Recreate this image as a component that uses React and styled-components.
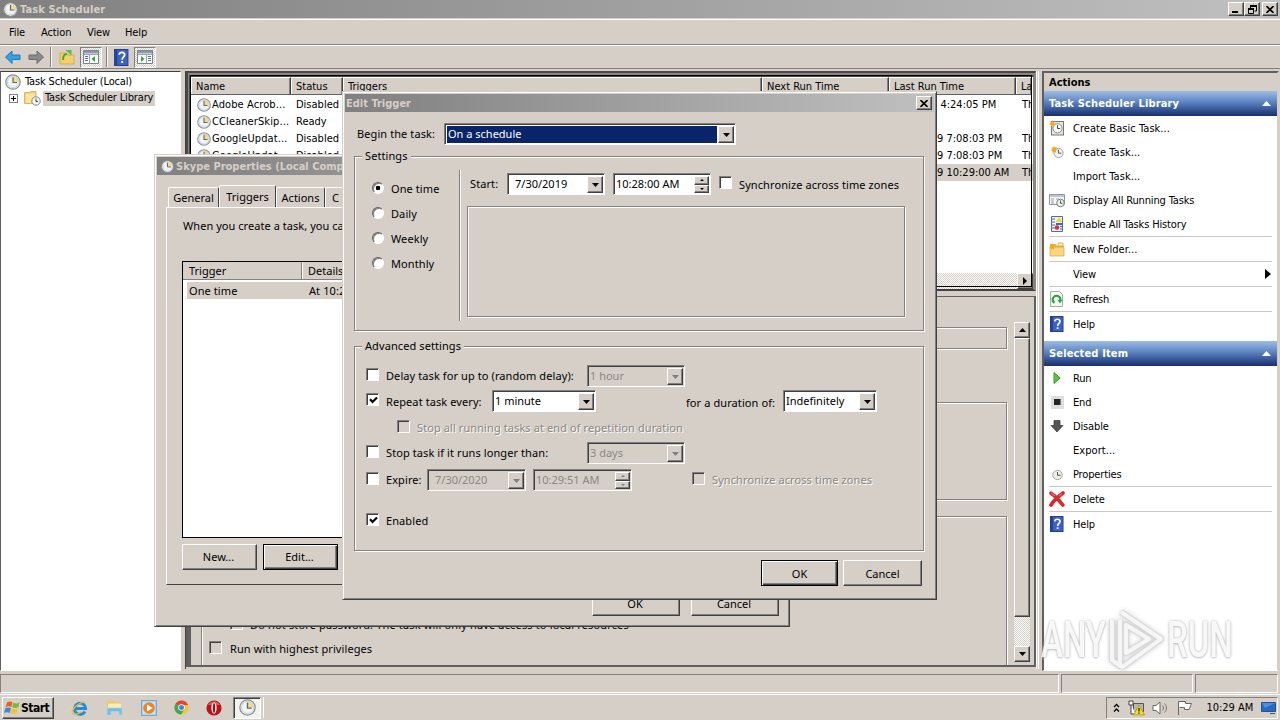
import React from "react"
import styled, { createGlobalStyle, css } from "styled-components"

const face = "#d5cfc8"
const tahoma = `"DejaVu Sans Condensed", "DejaVu Sans", sans-serif`
const segoe = `"Noto Sans", sans-serif`

const menuItems = [
  { label: "File", width: 32 },
  { label: "Action", width: 46 },
  { label: "View", width: 38 },
  { label: "Help", width: 40 },
]

const columns = [
  { label: "Name", width: 100 },
  { label: "Status", width: 52 },
  { label: "Triggers", width: 419 },
  { label: "Next Run Time", width: 127 },
  { label: "Last Run Time", width: 127 },
  { label: "La", width: 16 },
]

const tasks = [
  { name: "Adobe Acrob...", status: "Disabled", last: "8 4:24:05 PM", res: "Th", pad: 43 },
  { name: "CCleanerSkip...", status: "Ready", last: "", res: "", pad: 43 },
  { name: "GoogleUpdat...", status: "Disabled", last: "9 7:08:03 PM", res: "Th", pad: 49 },
  { name: "GoogleUpdat...", status: "Disabled", last: "9 7:08:03 PM", res: "Th", pad: 49 },
  { name: "", status: "", last: "9 10:29:00 AM", res: "Th", pad: 49, selected: true },
]

const Clock = ({ size = 14 }) => (
  <svg width={size} height={size} viewBox="0 0 16 16">
    <circle cx="8" cy="8" r="7.2" fill="#eef3f4" stroke="#8b8e92" strokeWidth="1.2" />
    <path d="M8 8V2.4A5.6 5.6 0 0 1 13.6 8Z" fill="#f3dc86" />
    <circle cx="8" cy="8" r="5.7" fill="none" stroke="#c6cdd2" strokeWidth=".8" />
    <path d="M8 3.2V8.5H12" fill="none" stroke="#5d656e" strokeWidth="1.2" />
  </svg>
)

const Star = () => (
  <path d="M4 0l1 2.4L7.5 1.600 6.500 4 9 5.200 6.300 6 6.800 8.600 4.400 7.300 2.400 9 2.300 6.300 0 5.500 2.200 4.200 1.200 1.800 3.200 2.500Z" fill="#f0a81f" />
)

const FolderIcon = ({ size = 16 }) => (
  <svg width={size} height={size} viewBox="0 0 16 16">
    <path d="M1 3h6l1 2h7v10H1z" fill="#e9b94c" />
    <path d="M9 2h5v3H9z" fill="#fff2ba" stroke="#c9973a" strokeWidth=".7" />
    <path d="M1 6h14v9H1z" fill="#f8d77f" stroke="#d9a640" strokeWidth=".7" />
    <g transform="translate(0 2) scale(.75)"><Star /></g>
  </svg>
)

const HelpIcon = ({ size = 16 }) => (
  <svg width={size} height={size} viewBox="0 0 16 16">
    <rect x="1.500" y=".5" width="12.500" height="15" fill="#3c63c4" stroke="#233f8e" />
    <path d="M2 1h2v14H2z" fill="#27458f" />
    <path d="M5.800 5.500C5.800 2.300 11.300 2.500 11 5.600 10.800 7.400 8.600 7.500 8.600 10" fill="none" stroke="#fff" strokeWidth="1.600" />
    <rect x="7.700" y="11.300" width="1.800" height="1.800" fill="#fff" />
  </svg>
)

const BasicTaskIcon = () => (
  <svg width="16" height="16" viewBox="0 0 16 16">
    <rect x="2.500" y="1.500" width="12" height="13.500" fill="#e9e4dc" stroke="#7b7771" />
    <circle cx="8.500" cy="8.300" r="4.600" fill="#f5f7f7" stroke="#868b90" />
    <path d="M8.500 5.200v3.300h2.600" fill="none" stroke="#444" />
    <g transform="scale(.75)"><Star /></g>
  </svg>
)

const NewTaskIcon = () => (
  <svg width="16" height="16" viewBox="0 0 16 16">
    <circle cx="9.500" cy="9" r="4.600" fill="#eef2f3" stroke="#a3a8ac" />
    <path d="M9.500 5.800v3.400h2.800" fill="none" stroke="#53606c" />
    <g transform="translate(1.500 1.500) scale(.85)"><Star /></g>
  </svg>
)

const RunningIcon = () => (
  <svg width="16" height="16" viewBox="0 0 16 16">
    <path d="M.5 2.500h15v10H.5z" fill="#f7f8fa" stroke="#8b99ab" />
    <path d="M1 3h14v2H1z" fill="#b9c5d4" />
    <path d="M2 7h3M2 9h3M2 11h3M7 7h3" stroke="#94a0ad" />
    <circle cx="11.500" cy="11" r="3.800" fill="#edf2ec" stroke="#768275" />
    <path d="M11.500 8.500V11.300h2" fill="none" stroke="#455" />
  </svg>
)

const HistoryIcon = () => (
  <svg width="16" height="16" viewBox="0 0 16 16">
    <path d="M2.500.5h11v15h-11z" fill="#eef1fa" stroke="#536aa4" />
    <path d="M3 3h3M3 6h3M3 9h3M3 12h3" stroke="#5d6c91" />
    <path d="M10 1l3.500 5h-7z" fill="#f2d52f" />
    <path d="M7 8h6" stroke="#3e62bb" strokeWidth="2" />
    <circle cx="8" cy="11.500" r="2.300" fill="#d6312c" />
    <path d="M11 10.500h2M11 13h2" stroke="#3e62bb" />
  </svg>
)

const RefreshIcon = () => (
  <svg width="16" height="16" viewBox="0 0 16 16">
    <path d="M1.500.5h9l3 3v12h-12z" fill="#f4faf2" stroke="#9bb79b" />
    <path d="M5.500 11.800A3.800 3.800 0 1 1 11.200 9.500" fill="none" stroke="#2fa03b" strokeWidth="2" />
    <path d="M8.500 8.700h5l-2.500 3.800z" fill="#2fa03b" />
  </svg>
)

const RunIcon = () => (
  <svg width="16" height="16" viewBox="0 0 16 16">
    <path d="M5 2.500L11 8l-6 5.500z" fill="#57c93b" stroke="#36972a" />
  </svg>
)

const EndIcon = () => (
  <svg width="16" height="16" viewBox="0 0 16 16">
    <path d="M2 2h13v13H2z" fill="#dedede" />
    <path d="M5 5h6.500v6H5z" fill="#252525" />
  </svg>
)

const DisableIcon = () => (
  <svg width="16" height="16" viewBox="0 0 16 16">
    <path d="M5 2.500h6v5h3L8 14 2 7.500h3z" fill="#555" stroke="#333" strokeWidth=".7" />
  </svg>
)

const DeleteIcon = () => (
  <svg width="16" height="16" viewBox="0 0 16 16">
    <path d="M2 2.200C5.500 4.500 10 9 13.800 14M14 2C10 5 5 9 2 14" fill="none" stroke="#d52b2f" strokeWidth="3.700" strokeLinecap="round" />
    <path d="M2 2l4 3M13 2.500L10 5" stroke="#f28a86" strokeWidth="1" />
  </svg>
)

const SmallClock = () => (
  <svg width="16" height="16" viewBox="0 0 16 16">
    <circle cx="8.500" cy="9" r="4.700" fill="#f2ecdf" stroke="#a2a7ac" />
    <path d="M8.500 6v3.300h3" fill="none" stroke="#4d555e" />
  </svg>
)

const ArrowIcon = ({ color, edge, flip }) => (
  <svg width="18" height="16" viewBox="0 0 18 16">
    <path
      d="M1.500 8l6.500-6v4h8v4.500H8v4z"
      fill={color}
      stroke={edge}
      transform={flip ? "translate(18 0) scale(-1 1)" : undefined}
    />
  </svg>
)

const UpFolder = () => (
  <svg width="16" height="16" viewBox="0 0 16 16">
    <path d="M1 4h6l1 2h7v9H1z" fill="#f4d069" stroke="#d0a343" strokeWidth=".8" />
    <path d="M4 11C4 7 6 5 8 5" fill="none" stroke="#47a92d" strokeWidth="2" />
    <path d="M6.500 1h6v5.500z" fill="#5dbb3b" />
  </svg>
)

const PaneIcon = ({ right }) => (
  <svg width="16" height="16" viewBox="0 0 16 16">
    <g transform={right ? "translate(16 0) scale(-1 1)" : undefined}>
      <path d="M.5 1.500h15v13H.5z" fill="#fafbfc" stroke="#788390" />
      <path d="M1 2h14v2.500H1z" fill="#8b99aa" />
      <path d="M1 5.500h14M6.500 5.500v9" stroke="#97a4b1" />
      <path d="M2 7.500h3M2 9.500h3M2 11.500h3" stroke="#5d7590" />
      <path d="M12 7v6L8.500 10z" fill="#3ba52d" />
    </g>
  </svg>
)

const LibraryIcon = () => (
  <svg width="17" height="16" viewBox="0 0 17 16">
    <path d="M.5 2.500h5l1.500-1h5v12H.5z" fill="#f5d57b" stroke="#d5a745" strokeWidth=".8" />
    <path d="M2 4h9v9H2z" fill="#fae5a0" />
    <circle cx="12" cy="11" r="4.200" fill="#f1f4f4" stroke="#85888c" />
    <path d="M12 8.500v3h2" fill="none" stroke="#444" />
  </svg>
)

const StartFlag = () => (
  <svg width="17" height="16" viewBox="0 0 17 16">
    <path d="M3 2.500c2-1.300 4-1.200 5.500-.3L7.300 7C5.500 6 3.500 6 1.600 7z" fill="#e5622b" />
    <path d="M9.300 2.700c2 1 4 1 6.200-.2l-1.300 4.800c-2 1-4 1-6 0z" fill="#7cb834" />
    <path d="M1.300 8.200c2-1 4-.9 5.700 0L5.700 13C4 12 2 12 0 13z" fill="#3c8ad6" />
    <path d="M7.800 8.500c2 1 4 1 6 0l-1.300 4.800c-2 1-4 1-6 0z" fill="#f5c42c" />
  </svg>
)

const IeIcon = () => (
  <svg width="18" height="18" viewBox="0 0 18 18">
    <path d="M14 12.500A5.600 5.600 0 1 1 14.700 9.500H5" fill="none" stroke="#258bd3" strokeWidth="2.800" />
    <ellipse cx="9" cy="9" rx="9" ry="4" fill="none" stroke="#e6bb35" strokeWidth="1.300" transform="rotate(-35 9 9)" strokeDasharray="27 16" strokeDashoffset="-12" />
  </svg>
)

const ExplorerIcon = () => (
  <svg width="17" height="16" viewBox="0 0 17 16">
    <path d="M1 1h6l1 1.500h7V9H1z" fill="#efc75c" />
    <path d="M2 3.500h13v6H2z" fill="#fbeeb5" />
    <path d="M1 8h15v7h-3v-3.500H5V15H1z" fill="#79bce1" stroke="#a9d3ea" strokeWidth=".8" />
  </svg>
)

const MediaIcon = () => (
  <svg width="16" height="16" viewBox="0 0 16 16">
    <rect x=".7" y=".7" width="14.600" height="14.600" fill="#c7e0f3" stroke="#5b9ed2" />
    <circle cx="8" cy="8" r="5.800" fill="#ef8420" />
    <path d="M6 4.500v7L11.800 8z" fill="#fff" />
  </svg>
)

const ChromeIcon = () => (
  <svg width="15" height="15" viewBox="0 0 16 16">
    <circle cx="8" cy="8" r="7.500" fill="#f3c52f" />
    <path d="M8 8L1.500 4.200A7.500 7.500 0 0 1 15 5.200H8z" fill="#dd4639" />
    <path d="M8 8L1.500 4.200A7.500 7.500 0 0 0 7.700 15.500L11 9.500z" fill="#3ea550" />
    <circle cx="8" cy="8" r="3.500" fill="#fff" />
    <circle cx="8" cy="8" r="2.700" fill="#4586e2" />
  </svg>
)

const OperaIcon = () => (
  <svg width="16" height="16" viewBox="0 0 16 16">
    <circle cx="8" cy="8" r="7.600" fill="#b9141c" />
    <path d="M2 5a7 7 0 0 1 12 0z" fill="#dd5b5b" />
    <ellipse cx="8" cy="8" rx="2.600" ry="5.700" fill="#fff" />
    <ellipse cx="8" cy="8" rx="1.200" ry="5" fill="#a31017" />
  </svg>
)

const NetworkIcon = () => (
  <svg width="17" height="16" viewBox="0 0 17 16">
    <path d="M5.500 3.500h10v8h-10z" fill="#b7b7b4" stroke="#555" />
    <path d="M1 1h4v4H1zM3 5v9h5" fill="#fff" stroke="#444" />
    <path d="M11 5l5.500 10h-11z" fill="#f5da2b" stroke="#a58d16" strokeWidth=".7" />
    <path d="M11 8v3.500M11 12.500v1.300" stroke="#222" strokeWidth="1.300" />
  </svg>
)

const SpeakerIcon = () => (
  <svg width="17" height="16" viewBox="0 0 17 16">
    <path d="M1 5.500h3L8 2v12l-4-3.500H1z" fill="#fff" stroke="#666" />
    <path d="M10.500 5.500c1.300 1.500 1.300 3.500 0 5M12.500 3.500c2.600 2.600 2.600 6.400 0 9" fill="none" stroke="#777" />
  </svg>
)

const FlagIcon = () => (
  <svg width="16" height="16" viewBox="0 0 16 16">
    <path d="M1.500 15V1.500h7v2h6L12 9.500H7.500v-2h-5" fill="#fff" stroke="#666" />
  </svg>
)

const MonitorIcon = () => (
  <svg width="15" height="12" viewBox="0 0 15 12">
    <path d="M.5.5h14v9H.5z" fill="#286ac0" stroke="#245190" />
    <path d="M1 1h13L4 6z" fill="#4a90dc" />
    <path d="M9 11.500h5" stroke="#555" />
  </svg>
)

const Tri = ({ dir = "down", color = "#000", small }) => {
  const paths = { down: "M0 0h7L3.500 4z", up: "M0 4h7L3.500 0z" }
  return (
    <svg width={small ? 4 : 7} height={small ? 2 : 4} viewBox="0 0 7 4" preserveAspectRatio="none">
      <path d={paths[dir]} fill={color} />
    </svg>
  )
}

const CloseGlyph = () => (
  <svg width="8" height="7" viewBox="0 0 8 7">
    <path d="M.5 0l7 7M7.500 0l-7 7" stroke="#000" strokeWidth="1.600" />
  </svg>
)

const Combo = ({ width, ml, children, disabled, selected, pad }) => (
  <Field $w={width} $ml={ml} $disabled={disabled}>
    <FieldText $selected={selected} $pad={pad}>{children}</FieldText>
    <DropButton><Tri color={disabled ? "#808080" : "#000"} /></DropButton>
  </Field>
)

const Spinner = ({ width, ml, children, disabled }) => (
  <Field $w={width} $ml={ml} $disabled={disabled}>
    <FieldText>{children}</FieldText>
    <SpinButtons>
      <SpinButton><Tri dir="up" small color={disabled ? "#808080" : "#000"} /></SpinButton>
      <SpinButton><Tri small color={disabled ? "#808080" : "#000"} /></SpinButton>
    </SpinButtons>
  </Field>
)

const Check = ({ checked, disabled, ml }) => (
  <CheckBox $disabled={disabled} $ml={ml}>
    {checked && (
      <svg width="9" height="9" viewBox="0 0 9 9">
        <path d="M1 3.300L3.500 6 8 1.500" fill="none" stroke="#000" strokeWidth="2.200" />
      </svg>
    )}
  </CheckBox>
)

const ActionItem = ({ icon, children, arrow }) => (
  <ActionRow>
    <ActionIcon>{icon}</ActionIcon>
    <ActionLabel $loose={children.endsWith("...")}>{children}</ActionLabel>
    {arrow && (
      <svg width="6" height="10" viewBox="0 0 6 10"><path d="M0 0l6 5-6 5z" fill="#000" /></svg>
    )}
  </ActionRow>
)

const MainWindow = () => (
  <Main>
    <MainTitle>
      <Clock size={15} />
      <TitleText>Task Scheduler</TitleText>
      <CaptionButton $w={16}><svg width="8" height="7"><path d="M0 5h6v2H0z" /></svg></CaptionButton>
      <CaptionButton $w={16}>
        <svg width="9" height="9" viewBox="0 0 9 9">
          <path d="M2.500 3V1h6v5H6.500" fill="none" stroke="#000" />
          <path d="M2 1h7M0 4h6" stroke="#000" strokeWidth="2" />
          <path d="M.5 4v4.500h5V4" fill="none" stroke="#000" />
        </svg>
      </CaptionButton>
      <CaptionButton $w={16} $gap><CloseGlyph /></CaptionButton>
    </MainTitle>
    <MenuBar>
      {menuItems.map((item) => (
        <MenuItem key={item.label} $w={item.width}>{item.label}</MenuItem>
      ))}
    </MenuBar>
    <ToolBar>
      <ArrowIcon color="#2fa3e4" edge="#2478b5" />
      <ToolGap $w={5} />
      <ArrowIcon color="#8b8b8b" edge="#6d6d6d" flip />
      <ToolSep $ml={5} $mr={7} />
      <UpFolder />
      <ToolGap $w={5} />
      <Pressed><PaneIcon /></Pressed>
      <ToolSep $ml={4} $mr={5} />
      <HelpIcon size={17} />
      <ToolGap $w={4} />
      <Pressed><PaneIcon right /></Pressed>
    </ToolBar>
    <Body>
      <Tree>
        <TreeRow>
          <Clock size={16} />
          <TreeLabel>Task Scheduler (Local)</TreeLabel>
        </TreeRow>
        <TreeRow $indent>
          <Expander>
            <svg width="5" height="5"><path d="M0 2h5v1H0zM2 0h1v5H2z" /></svg>
          </Expander>
          <LibraryIcon />
          <TreeLabel $selected>Task Scheduler Library</TreeLabel>
        </TreeRow>
      </Tree>
      <Center>
        <TaskList>
          <ListHeader>
            {columns.map((col) => (
              <HeaderCell key={col.label} $w={col.width}>{col.label}</HeaderCell>
            ))}
          </ListHeader>
          {tasks.map((task, i) => (
            <TaskRow key={i} $selected={task.selected}>
              <Cell $w={100} $pad={6}><Clock /><Ellipsis>{task.name}</Ellipsis></Cell>
              <Cell $w={546} $pad={5}>{task.status}</Cell>
              <Cell $w={179} $pad={task.pad + 51}>{task.last}</Cell>
              <Cell $w={16} $pad={6}>{task.res}</Cell>
            </TaskRow>
          ))}
          <HScroll>
            <ScrollButton><svg width="4" height="8" viewBox="0 0 4 8"><path d="M0 0l4 4-4 4z" /></svg></ScrollButton>
          </HScroll>
        </TaskList>
        <Details>
          <DetailsContent>
            <Group $h={22} $mt={30} />
            <Group $h={98} $mt={53} />
            <Group $h={150} $mt={16} $open>
              <Line $h={24} $mt={96} $pl={28}>
                <Check disabled />
                <Label $ml={7} $wide>Do not store password. The task will only have access to local resources</Label>
              </Line>
              <Line $h={24} $pl={7}>
                <Check disabled />
                <Label $ml={8}>Run with highest privileges</Label>
              </Line>
            </Group>
          </DetailsContent>
          <VScroll>
            <ScrollButton><Tri dir="up" /></ScrollButton>
            <Thumb />
            <ScrollButton><Tri /></ScrollButton>
          </VScroll>
        </Details>
      </Center>
      <Actions>
        <ActionsTitle>Actions</ActionsTitle>
        <ActionsHeader>Task Scheduler Library<Tri dir="up" color="#fff" /></ActionsHeader>
        <ActionItem icon={<BasicTaskIcon />}>Create Basic Task...</ActionItem>
        <ActionItem icon={<NewTaskIcon />}>Create Task...</ActionItem>
        <ActionItem>Import Task...</ActionItem>
        <ActionItem icon={<RunningIcon />}>Display All Running Tasks</ActionItem>
        <ActionItem icon={<HistoryIcon />}>Enable All Tasks History</ActionItem>
        <ActionSep />
        <ActionItem icon={<FolderIcon />}>New Folder...</ActionItem>
        <ActionSep />
        <ActionItem arrow>View</ActionItem>
        <ActionSep />
        <ActionItem icon={<RefreshIcon />}>Refresh</ActionItem>
        <ActionSep />
        <ActionItem icon={<HelpIcon />}>Help</ActionItem>
        <ActionsHeader $mt={5}>Selected Item<Tri dir="up" color="#fff" /></ActionsHeader>
        <ActionItem icon={<RunIcon />}>Run</ActionItem>
        <ActionItem icon={<EndIcon />}>End</ActionItem>
        <ActionItem icon={<DisableIcon />}>Disable</ActionItem>
        <ActionItem>Export...</ActionItem>
        <ActionItem icon={<SmallClock />}>Properties</ActionItem>
        <ActionSep />
        <ActionItem icon={<DeleteIcon />}>Delete</ActionItem>
        <ActionSep />
        <ActionItem icon={<HelpIcon />}>Help</ActionItem>
      </Actions>
    </Body>
    <StatusBar>
      <StatusCell />
      <StatusCell $w={132} />
      <StatusCell $w={83} />
    </StatusBar>
  </Main>
)

const TaskBar = () => (
  <Bar>
    <StartButton><StartFlag />Start</StartButton>
    <QuickLaunch>
      <IeIcon />
      <ExplorerIcon />
      <MediaIcon />
      <ChromeIcon />
      <OperaIcon />
    </QuickLaunch>
    <ActiveTask><Clock size={17} /></ActiveTask>
    <Grip />
    <Tray>
      <svg width="7" height="10" viewBox="0 0 7 10">
        <path d="M1 4l2.500-2.500L6 4M1 8.500L3.500 6 6 8.500" fill="none" stroke="#000" strokeWidth="1.400" />
      </svg>
      <NetworkIcon />
      <SpeakerIcon />
      <FlagIcon />
      <Time>10:29 AM</Time>
      <MonitorIcon />
    </Tray>
  </Bar>
)

const SkypeDialog = () => (
  <SkypeWindow>
    <DialogTitle $pad={4}>
      <Clock size={13} />
      <TitleText>Skype Properties (Local Comp</TitleText>
    </DialogTitle>
    <Tabs>
      <Tab $w={51}>General</Tab>
      <Tab $w={57} $active>Triggers</Tab>
      <Tab $w={49}>Actions</Tab>
      <Tab $w={60} $left>C</Tab>
    </Tabs>
    <TabPage>
      <Intro>When you create a task, you can</Intro>
      <TriggerList>
        <TriggerHeader>
          <TriggerCell $w={119}>Trigger</TriggerCell>
          <TriggerCell $w={300}>Details</TriggerCell>
        </TriggerHeader>
        <TriggerRow>
          <Label $w={120}>One time</Label>
          <Label>At 10:28</Label>
        </TriggerRow>
      </TriggerList>
      <ButtonRow>
        <Button $w={75} $h={26}>New...</Button>
        <Button $w={75} $h={26} $default>Edit...</Button>
      </ButtonRow>
    </TabPage>
    <DialogButtons>
      <Button $w={88} $h={24}>OK</Button>
      <Button $w={88} $h={24}>Cancel</Button>
    </DialogButtons>
  </SkypeWindow>
)

const EditDialog = () => (
  <EditWindow>
    <DialogTitle $pad={1}>
      <TitleText>Edit Trigger</TitleText>
      <CaptionButton $w={16}><CloseGlyph /></CaptionButton>
    </DialogTitle>
    <Line $h={22} $mt={11} $pl={12}>
      <Label $w={87}>Begin the task:</Label>
      <Combo width={292} selected>On a schedule</Combo>
    </Line>
    <EditGroup $h={175} $mt={11}>
      <Legend>Settings</Legend>
      <SettingsBody>
        <Radios>
          <RadioRow><Radio $checked /><Label $ml={7}>One time</Label></RadioRow>
          <RadioRow><Radio /><Label $ml={7}>Daily</Label></RadioRow>
          <RadioRow><Radio /><Label $ml={7}>Weekly</Label></RadioRow>
          <RadioRow><Radio /><Label $ml={7}>Monthly</Label></RadioRow>
        </Radios>
        <Schedule>
          <Line $h={22} $pl={4}>
            <Label $w={37}>Start:</Label>
            <Combo width={98} pad={6}>7/30/2019</Combo>
            <Spinner width={98} ml={8}>10:28:00 AM</Spinner>
            <Check ml={8} />
            <Label $ml={7} $mt={2}>Synchronize across time zones</Label>
          </Line>
          <SchedulePane />
        </Schedule>
      </SettingsBody>
    </EditGroup>
    <EditGroup $h={205} $mt={15}>
      <Legend>Advanced settings</Legend>
      <Line $h={22} $mt={11} $pl={11}>
        <Check />
        <Label $ml={7} $w={201}>Delay task for up to (random delay):</Label>
        <Combo width={98} disabled>1 hour</Combo>
      </Line>
      <Line $h={22} $mt={3} $pl={11}>
        <Check checked />
        <Label $ml={7} $w={106} $mt={2}>Repeat task every:</Label>
        <Combo width={104}>1 minute</Combo>
        <Label $ml={90} $w={97} $mt={3}>for a duration of:</Label>
        <Combo width={94}>Indefinitely</Combo>
      </Line>
      <Line $h={22} $mt={5} $pl={42}>
        <Check disabled />
        <Label $ml={7} $disabled>Stop all running tasks at end of repetition duration</Label>
      </Line>
      <Line $h={22} $mt={3} $pl={11}>
        <Check />
        <Label $ml={7} $w={201}>Stop task if it runs longer than:</Label>
        <Combo width={98} disabled>3 days</Combo>
      </Line>
      <Line $h={22} $mt={5} $pl={11}>
        <Check />
        <Label $ml={7} $w={41}>Expire:</Label>
        <Combo width={99} pad={6} disabled>7/30/2020</Combo>
        <Spinner width={99} ml={7} disabled>10:29:51 AM</Spinner>
        <Check ml={60} disabled />
        <Label $ml={7} $disabled>Synchronize across time zones</Label>
      </Line>
      <Line $h={22} $mt={19} $pl={11}>
        <Check checked />
        <Label $ml={7}>Enabled</Label>
      </Line>
    </EditGroup>
    <EditButtons>
      <Button $w={77} $h={26} $default $even>OK</Button>
      <Button $w={79} $h={26} $even>Cancel</Button>
    </EditButtons>
  </EditWindow>
)

const Watermark = () => (
  <Mark>
    <MarkText $w={64}>ANY</MarkText>
    <svg width="62" height="64" viewBox="0 0 62 64">
      <g fill="none" strokeLinejoin="round">
        <path d="M16 4L56 31 16 60M7 12v40l8 6V12M21 17v28L44 31z" stroke="#d6d6d6" strokeWidth="6" />
        <path d="M16 4L56 31 16 60M7 12v40l8 6V12M21 17v28L44 31z" stroke="#f6f6f6" strokeWidth="4" />
      </g>
    </svg>
    <MarkText $w={64}>RUN</MarkText>
  </Mark>
)

const App = () => {
  return (
    <Screen>
      <GlobalStyle />
      <MainWindow />
      <TaskBar />
      <SkypeDialog />
      <EditDialog />
      <Watermark />
    </Screen>
  )
}

export default App

const GlobalStyle = createGlobalStyle`
  * {
    box-sizing: border-box;
  }
  body {
    margin: 0;
    overflow: hidden;
    background: ${face};
  }
  svg {
    display: block;
    flex: none;
  }
`

const raised = css`
  background: ${face};
  border: 1px solid;
  border-color: #fff #404040 #404040 #fff;
  box-shadow: inset -1px -1px 0 #808080;
`
const sunken = css`
  border: 1px solid;
  border-color: #808080 #fff #fff #808080;
  box-shadow: inset 1px 1px 0 #404040;
`
const etched = css`
  border: 1px solid #858079;
  box-shadow: 1px 1px 0 #fff, inset 1px 1px 0 #fff;
`
const dither = css`
  background: repeating-conic-gradient(#fff 0 25%, ${face} 0 50%) 0 0 / 2px 2px;
`

const Screen = styled.div`
  position: relative;
  width: 1280px;
  height: 720px;
  overflow: hidden;
  display: flex;
  flex-direction: column;
  background: ${face};
  color: #000;
  font-family: ${tahoma};
  font-size: 11px;
  white-space: nowrap;
`
const Main = styled.div`
  height: 694px;
  display: flex;
  flex-direction: column;
`
const MainTitle = styled.div`
  height: 18px;
  display: flex;
  align-items: center;
  padding: 0 2px 0 3px;
  background: linear-gradient(90deg, #808080, #c0c0c0);
`
const TitleText = styled.div`
  flex: 1;
  margin-left: 2px;
  color: ${face};
  font-weight: bold;
  letter-spacing: 0.1px;
`
const CaptionButton = styled.div`
  ${raised}
  width: ${({ $w }) => $w}px;
  height: 14px;
  margin-left: ${({ $gap }) => ($gap ? 2 : 0)}px;
  display: flex;
  align-items: center;
  justify-content: center;
`
const MenuBar = styled.div`
  height: 26px;
  margin-top: 1px;
  padding-left: 2px;
  display: flex;
  align-items: center;
  border-top: 1px solid #fff;
  border-bottom: 1px solid #858079;
`
const MenuItem = styled.div`
  width: ${({ $w }) => $w}px;
  padding-left: 7px;
  letter-spacing: -0.1px;
`
const ToolBar = styled.div`
  height: 24px;
  padding-left: 4px;
  display: flex;
  align-items: center;
  border-top: 1px solid #fff;
  border-bottom: 1px solid #858079;
`
const ToolGap = styled.div`
  width: ${({ $w }) => $w}px;
`
const ToolSep = styled.div`
  width: 2px;
  height: 20px;
  margin: 0 ${({ $mr }) => $mr}px 0 ${({ $ml }) => $ml}px;
  border-left: 1px solid #858079;
  border-right: 1px solid #fff;
`
const Pressed = styled.div`
  width: 22px;
  height: 21px;
  display: flex;
  align-items: center;
  justify-content: center;
  border: 1px solid;
  border-color: #858079 #fff #fff #858079;
  ${dither}
`
const Body = styled.div`
  height: 601px;
  margin-top: 2px;
  display: flex;
`
const Tree = styled.div`
  width: 181px;
  height: 600px;
  padding-top: 2px;
  background: #fff;
  border: 1px solid;
  border-color: #404040 #fff #fff #606060;
  letter-spacing: -0.15px;
`
const TreeRow = styled.div`
  height: 16px;
  display: flex;
  align-items: center;
  padding-left: ${({ $indent }) => ($indent ? 8 : 4)}px;
`
const TreeLabel = styled.div`
  padding: 1px 2px 2px;
  line-height: 12px;
  margin-left: 2px;
  background: ${({ $selected }) => ($selected ? face : "transparent")};
`
const Expander = styled.div`
  width: 9px;
  height: 9px;
  margin-right: 6px;
  display: flex;
  align-items: center;
  justify-content: center;
  border: 1px solid #858079;
`
const Center = styled.div`
  width: 854px;
  margin-left: 4px;
  height: 598px;
  border-left: 1px solid #404040;
  border-right: 3px double #fff;
`
const TaskList = styled.div`
  height: 220px;
  display: flex;
  flex-direction: column;
  background: linear-gradient(#fff, #fff) padding-box, #8b8681;
  border: 5px double #4b4846;
  border-top-width: 6px;
  border-bottom: 2px solid #404040;
  border-right: 3px solid #8b8681;
  outline: 1px solid #000;
  outline-offset: -5px;
  overflow: hidden;
`
const ListHeader = styled.div`
  height: 18px;
  flex: none;
  margin-bottom: 1px;
  display: flex;
`
const HeaderCell = styled.div`
  width: ${({ $w }) => $w}px;
  flex: none;
  padding: 2px 0 0 5px;
  overflow: hidden;
  background: ${face};
  border: solid;
  border-width: 1px 1px 1px 0;
  border-color: #fff #404040 #606060 #fff;
  box-shadow: inset 1px 0 0 #fff, inset -1px 0 0 #858079;
`
const TaskRow = styled.div`
  height: 17px;
  flex: none;
  display: flex;
  align-items: center;
  background: ${({ $selected }) => ($selected ? face : "#fff")};
`
const Cell = styled.div`
  width: ${({ $w }) => $w}px;
  flex: none;
  display: flex;
  align-items: center;
  padding-left: ${({ $pad }) => $pad}px;
  overflow: hidden;
`
const Ellipsis = styled.div`
  margin-left: 1px;
  letter-spacing: 0.1px;
`
const HScroll = styled.div`
  height: 16px;
  margin-top: auto;
  display: flex;
  justify-content: flex-end;
  ${dither}
`
const ScrollButton = styled.div`
  ${raised}
  width: 16px;
  height: 16px;
  flex: none;
  display: flex;
  align-items: center;
  justify-content: center;
`
const Details = styled.div`
  height: 371px;
  margin-top: 5px;
  padding: 0 4px 0 10px;
  display: flex;
  background: ${face};
  border: solid #606060;
  border-width: 1px 2px 2px 5px;
`
const DetailsContent = styled.div`
  flex: 1;
  overflow: hidden;
  padding-right: 7px;
`
const Group = styled.div`
  height: ${({ $h }) => $h}px;
  margin-top: ${({ $mt }) => $mt}px;
  border-bottom-width: ${({ $open }) => ($open ? 0 : 1)}px;
  ${etched}
`
const VScroll = styled.div`
  width: 16px;
  margin: 25px 0 3px;
  display: flex;
  flex-direction: column;
  ${dither}
`
const Thumb = styled.div`
  ${raised}
  height: 279px;
  margin-bottom: auto;
`
const Actions = styled.div`
  width: 237px;
  margin-left: 3px;
  height: 600px;
  background: #fff;
  border: solid;
  border-width: 2px 2px 1px;
  border-color: #606060 ${face} #fff #606060;
`
const ActionsTitle = styled.div`
  height: 18px;
  padding: 3px 0 0 5px;
  font-weight: bold;
  background: ${face};
`
const ActionsHeader = styled.div`
  height: 25px;
  margin-top: ${({ $mt }) => $mt || 0}px;
  padding: 0 6px 0 5px;
  display: flex;
  align-items: center;
  justify-content: space-between;
  color: #fff;
  font-weight: bold;
  letter-spacing: 0.15px;
  background: linear-gradient(#9dbde6, #5c83c0 45%, #294587 85%, #1d2f66);
  svg {
    width: 9px;
    height: 5px;
  }
`
const ActionRow = styled.div`
  height: 24px;
  display: flex;
  align-items: center;
  padding: 0 6px 0 5px;
`
const ActionIcon = styled.div`
  width: 16px;
  margin-right: 8px;
`
const ActionLabel = styled.div`
  flex: 1;
  letter-spacing: ${({ $loose }) => ($loose ? 0.05 : -0.15)}px;
`
const ActionSep = styled.div`
  height: 1px;
  margin: 0 5px;
  background: #cbc8c4;
`
const StatusBar = styled.div`
  height: 19px;
  margin-top: 2px;
  padding-right: 2px;
  display: flex;
  gap: 2px;
`
const StatusCell = styled.div`
  flex: ${({ $w }) => ($w ? `0 0 ${$w}px` : 1)};
  border: 1px solid;
  border-color: #858079 #fff #fff #858079;
`
const Bar = styled.div`
  height: 26px;
  display: flex;
  align-items: center;
  padding: 0 2px;
  border-top: 1px solid #fff;
`
const StartButton = styled.div`
  ${raised}
  width: 52px;
  height: 22px;
  display: flex;
  align-items: center;
  padding-left: 1px;
  font-size: 12px;
  font-weight: bold;
  letter-spacing: -0.5px;
`
const QuickLaunch = styled.div`
  width: 151px;
  margin: 0 11px 0 17px;
  display: flex;
  align-items: center;
  justify-content: space-between;
`
const ActiveTask = styled.div`
  ${sunken}
  width: 28px;
  height: 22px;
  display: flex;
  align-items: center;
  justify-content: center;
  background: #f4f2ef;
`
const Grip = styled.div`
  width: 3px;
  height: 21px;
  border-right: 1px solid #fff;
`
const Tray = styled.div`
  width: 172px;
  height: 22px;
  margin-left: auto;
  padding: 0 1px 0 6px;
  display: flex;
  align-items: center;
  justify-content: space-between;
  border: 1px solid;
  border-color: #858079 #fff #fff #858079;
`
const Time = styled.div`
  margin-left: 6px;
`

const windowFrame = css`
  position: absolute;
  display: flex;
  flex-direction: column;
  background: ${face};
  padding: 2px;
  border: 1px solid;
  border-color: ${face} #404040 #404040 ${face};
  box-shadow: inset 1px 1px 0 #fff, inset -1px -1px 0 #808080;
  font-family: ${segoe};
`
const SkypeWindow = styled.div`
  ${windowFrame}
  left: 154px;
  top: 154px;
  width: 636px;
  height: 473px;
`
const EditWindow = styled.div`
  ${windowFrame}
  left: 342px;
  top: 91px;
  width: 595px;
  height: 509px;
`
const DialogTitle = styled.div`
  height: 18px;
  flex: none;
  display: flex;
  align-items: center;
  padding: 0 2px 0 ${({ $pad }) => $pad}px;
  font-family: ${tahoma};
  background: linear-gradient(90deg, #808080, #c0c0c0);
  ${TitleText} {
    margin-left: ${({ $pad }) => ($pad > 1 ? 2 : 0)}px;
    letter-spacing: 0;
  }
`
const Tabs = styled.div`
  height: 22px;
  margin: 10px 0 0 11px;
  display: flex;
  align-items: flex-end;
`
const Tab = styled.div`
  width: ${({ $w }) => $w}px;
  height: ${({ $active }) => ($active ? 22 : 20)}px;
  display: flex;
  align-items: center;
  justify-content: ${({ $left }) => ($left ? "flex-start" : "center")};
  padding: 0 0 ${({ $active }) => ($active ? 1 : 0)}px ${({ $left }) => ($left ? 6 : 0)}px;
  border: solid;
  border-width: 1px 1px 0;
  border-color: #fff #404040 #fff #fff;
  border-radius: 2px 2px 0 0;
`
const TabPage = styled.div`
  height: 378px;
  margin: 0 8px 0 9px;
  padding: 10px 15px 0;
  border: 1px solid;
  border-color: #fff #404040 #404040 #fff;
`
const Intro = styled.div`
  height: 43px;
  line-height: 15px;
  padding-left: 1px;
  letter-spacing: 0.05px;
`
const TriggerList = styled.div`
  height: 277px;
  overflow: hidden;
  background: #fff;
  border: 1px solid #000;
`
const TriggerHeader = styled.div`
  height: 18px;
  display: flex;
  background: ${face};
  border-bottom: 1px solid #858079;
`
const TriggerCell = styled.div`
  width: ${({ $w }) => $w}px;
  padding-left: 6px;
  line-height: 18px;
  border-right: 1px solid #858079;
  box-shadow: 1px 0 0 #fff;
`
const TriggerRow = styled.div`
  height: 17px;
  margin: 2px 0 0 4px;
  padding-left: 2px;
  display: flex;
  align-items: center;
  background: ${face};
`
const ButtonRow = styled.div`
  margin-top: 6px;
  display: flex;
  gap: 6px;
`
const Button = styled.div`
  ${raised}
  ${({ $default }) => $default && css`
    border-color: #000;
    box-shadow: inset 1px 1px 0 #fff, inset -1px -1px 0 #404040, inset -2px -2px 0 #808080;
  `}
  width: ${({ $w }) => $w}px;
  height: ${({ $h }) => $h}px;
  display: flex;
  align-items: center;
  justify-content: center;
  padding: ${({ $even }) => ($even ? "0" : "0 2px 1px 0")};
`
const DialogButtons = styled.div`
  display: flex;
  justify-content: flex-end;
  gap: 11px;
  margin: 7px 8px 0 0;
`
const Line = styled.div`
  height: ${({ $h }) => $h}px;
  flex: none;
  display: flex;
  align-items: center;
  margin-top: ${({ $mt }) => $mt || 0}px;
  padding-left: ${({ $pl }) => $pl || 0}px;
`
const Label = styled.div`
  width: ${({ $w }) => ($w ? `${$w}px` : "auto")};
  flex: none;
  margin-top: ${({ $mt }) => $mt || 0}px;
  margin-left: ${({ $ml }) => $ml || 0}px;
  padding-bottom: 1px;
  font-family: ${segoe};
  letter-spacing: ${({ $wide }) => ($wide ? 0.15 : 0.09)}px;
  color: ${({ $disabled }) => ($disabled ? "#8c8781" : "#000")};
  text-shadow: ${({ $disabled }) => ($disabled ? "1px 1px 0 #fff" : "none")};
`
const Field = styled.div`
  ${sunken}
  width: ${({ $w }) => $w}px;
  height: 22px;
  flex: none;
  margin-left: ${({ $ml }) => $ml || 0}px;
  padding: 2px 1px 1px 2px;
  display: flex;
  background: ${({ $disabled }) => ($disabled ? face : "#fff")};
  color: ${({ $disabled }) => ($disabled ? "#8c8781" : "#000")};
`
const FieldText = styled.div`
  flex: 1;
  padding-left: ${({ $pad, $selected }) => ($pad ? $pad - 1 : $selected ? 1 : 0)}px;
  line-height: 16px;
  color: ${({ $selected }) => ($selected ? "#fff" : "inherit")};
  background: ${({ $selected }) => ($selected ? "#0a246a" : "transparent")};
`
const DropButton = styled.div`
  ${raised}
  width: 16px;
  margin-left: 1px;
  display: flex;
  align-items: center;
  justify-content: center;
`
const SpinButtons = styled.div`
  width: 15px;
  display: flex;
  flex-direction: column;
`
const SpinButton = styled.div`
  ${raised}
  flex: 1;
  display: flex;
  align-items: center;
  justify-content: center;
`
const CheckBox = styled.div`
  ${sunken}
  width: 13px;
  height: 13px;
  flex: none;
  margin: 0 0 3px ${({ $ml }) => $ml || 0}px;
  padding: 2px 0 0 2px;
  background: ${({ $disabled }) => ($disabled ? face : "#fff")};
`
const EditGroup = styled.div`
  ${etched}
  height: ${({ $h }) => $h}px;
  flex: none;
  margin: ${({ $mt }) => $mt}px 10px 0 9px;
`
const Legend = styled.div`
  width: fit-content;
  height: 16px;
  margin: -9px 0 0 7px;
  padding: 0 3px;
  line-height: 16px;
  letter-spacing: 0.09px;
  background: ${face};
`
const SettingsBody = styled.div`
  display: flex;
  padding-top: 6px;
`
const Radios = styled.div`
  width: 105px;
  height: 151px;
  padding: 6px 0 0 17px;
  border-right: 1px solid #858079;
  box-shadow: 1px 0 0 #fff;
`
const RadioRow = styled.div`
  height: 25px;
  display: flex;
  align-items: center;
`
const Radio = styled.div`
  width: 12px;
  height: 12px;
  margin-bottom: 1px;
  border-radius: 50%;
  border: 1px solid;
  border-color: #606060 #fff #fff #606060;
  box-shadow: inset 1px 1px 0 #858079;
  background: ${({ $checked }) => ($checked ? "radial-gradient(#000 2px, #fff 2.6px)" : "#fff")};
`
const Schedule = styled.div`
  padding: 3px 0 0 6px;
`
const SchedulePane = styled.div`
  ${etched}
  width: 438px;
  height: 111px;
  margin: 11px 0 0 1px;
`
const EditButtons = styled.div`
  display: flex;
  justify-content: flex-end;
  gap: 5px;
  margin: 9px 12px 0 0;
`
const Mark = styled.div`
  position: absolute;
  left: 1041px;
  top: 608px;
  display: flex;
  align-items: center;
  opacity: 0.9;
  svg {
    filter: drop-shadow(0 0 2px #c4c4c4);
  }
`
const MarkText = styled.div`
  width: ${({ $w }) => $w}px;
  color: #f8f8f8;
  font: 500 50px/60px Roboto, sans-serif;
  text-shadow: 0 0 3px #b2b2b2, 0 1px 3px #c2c2c2;
  transform: scaleX(0.66);
  transform-origin: left center;
`
